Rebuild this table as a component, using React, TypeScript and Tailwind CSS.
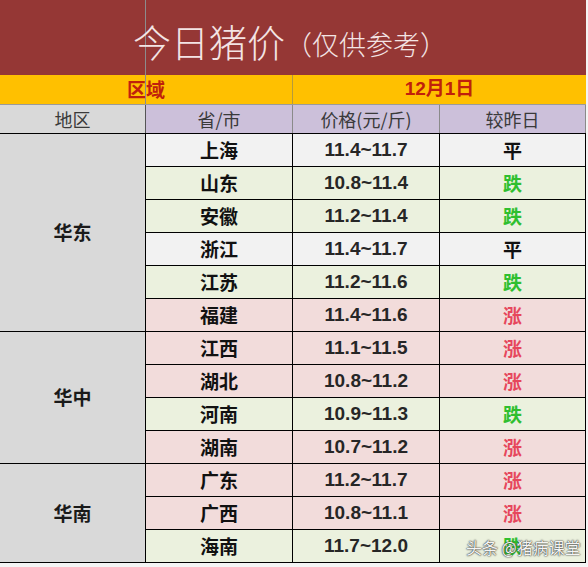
import React from "react";

type Row = { p: string; price: string; c: "平" | "跌" | "涨" };

const rows: Row[] = [
  { p: "上海", price: "11.4~11.7", c: "平" },
  { p: "山东", price: "10.8~11.4", c: "跌" },
  { p: "安徽", price: "11.2~11.4", c: "跌" },
  { p: "浙江", price: "11.4~11.7", c: "平" },
  { p: "江苏", price: "11.2~11.6", c: "跌" },
  { p: "福建", price: "11.4~11.6", c: "涨" },
  { p: "江西", price: "11.1~11.5", c: "涨" },
  { p: "湖北", price: "10.8~11.2", c: "涨" },
  { p: "河南", price: "10.9~11.3", c: "跌" },
  { p: "湖南", price: "10.7~11.2", c: "涨" },
  { p: "广东", price: "11.2~11.7", c: "涨" },
  { p: "广西", price: "10.8~11.1", c: "涨" },
  { p: "海南", price: "11.7~12.0", c: "跌" },
];

const regions = [
  { name: "华东", span: "row-span-6" },
  { name: "华中", span: "row-span-4" },
  { name: "华南", span: "row-span-3" },
];

const bgFor = (c: Row["c"]) =>
  c === "平" ? "bg-[#f2f2f2]" : c === "跌" ? "bg-[#ebf1de]" : "bg-[#f2dcdb]";

const colorFor = (c: Row["c"]) =>
  c === "平" ? "text-[#111111]" : c === "跌" ? "text-[#2fbf2f]" : "text-[#e6475c]";

const cjk = "font-['Noto_Sans_CJK_SC',sans-serif]";
const num = "font-['Liberation_Sans','Noto_Sans_CJK_SC',sans-serif]";

export default function App() {
  const regionStart = [0, 6, 10];
  return (
    <div className="w-[588px] h-[567px] bg-[#f4f4f4] overflow-hidden">
      <div className="w-[586px]">
        {/* Title */}
        <div
          className={`h-[75px] bg-[#953735] bg-[linear-gradient(to_right,transparent_145px,#8c8c8c_145px,#8c8c8c_146px,transparent_146px)] flex items-center justify-center pt-[6px] pr-[6px] ${cjk}`}
        >
          <span className="text-[38px] font-light text-[#f3e4e4] leading-none">今日猪价</span>
          <span className="text-[27px] font-light text-[#f3e4e4] leading-none mt-[6px]">（仅供参考）</span>
        </div>
        {/* Yellow band */}
        <div className="h-[29px] grid grid-cols-[293px_293px] bg-[#ffc000]">
          <div className="bg-[linear-gradient(to_right,transparent_145px,#8c8c8c_145px,#8c8c8c_146px,transparent_146px)] border-r border-[#b59a3c] flex items-center justify-center">
            <span className={`text-[19px] font-bold text-[#c0200c] ${cjk}`}>区域</span>
          </div>
          <div className="flex items-center justify-center">
            <span className={`text-[19px] font-bold text-[#c0200c] ${num}`}>12月1日</span>
          </div>
        </div>
        {/* Header row */}
        <div
          className={`h-[30px] grid grid-cols-[146px_147px_147px_146px] border-t border-[#9a9a9a] border-b border-b-black text-[18px] text-[#3a3a3a] ${cjk}`}
        >
          <div className="bg-[#d9d9d9] border-r border-[#555] flex items-center justify-center">地区</div>
          <div className="bg-[#ccc0da] border-r border-[#8a8a8a] flex items-center justify-center">省/市</div>
          <div className="bg-[#ccc0da] border-r border-[#8a8a8a] flex items-center justify-center">价格(元/斤)</div>
          <div className="bg-[#ccc0da] border-r border-[#8a8a8a] flex items-center justify-center">较昨日</div>
        </div>
        {/* Body */}
        <div className="grid grid-cols-[146px_147px_147px_146px] grid-rows-[repeat(13,33px)] grid-flow-dense">
          {regions.map((r, i) => (
            <div
              key={r.name}
              className={`${r.span} col-start-1 bg-[#d9d9d9] border-r border-b border-black flex items-center justify-center text-[19px] font-bold text-[#1a1a1a] ${cjk}`}
              style={{ gridRowStart: regionStart[i] + 1 }}
            >
              {r.name}
            </div>
          ))}
          {rows.map((r, i) => (
            <React.Fragment key={r.p}>
              <div
                className={`col-start-2 ${bgFor(r.c)} border-r border-b border-black flex items-center justify-center text-[19px] font-bold text-[#111111] ${cjk}`}
                style={{ gridRowStart: i + 1 }}
              >
                {r.p}
              </div>
              <div
                className={`col-start-3 ${bgFor(r.c)} border-r border-b border-black flex items-center justify-center text-[19px] font-bold text-[#262626] ${num}`}
                style={{ gridRowStart: i + 1 }}
              >
                {r.price}
              </div>
              <div
                className={`relative col-start-4 ${bgFor(r.c)} border-r border-b border-black flex items-center justify-center text-[19px] font-bold ${colorFor(r.c)} ${cjk}`}
                style={{ gridRowStart: i + 1 }}
              >
                {r.c}
                {i === rows.length - 1 && (
                  <span
                    className={`absolute left-[26px] top-[5px] text-[16px] font-normal text-[#f4f4f4] whitespace-nowrap [text-shadow:0_0_1px_#222,0_0_2px_#333] ${cjk}`}
                  >
                    头条 @猪病课堂
                  </span>
                )}
              </div>
            </React.Fragment>
          ))}
        </div>
      </div>
    </div>
  );
}
